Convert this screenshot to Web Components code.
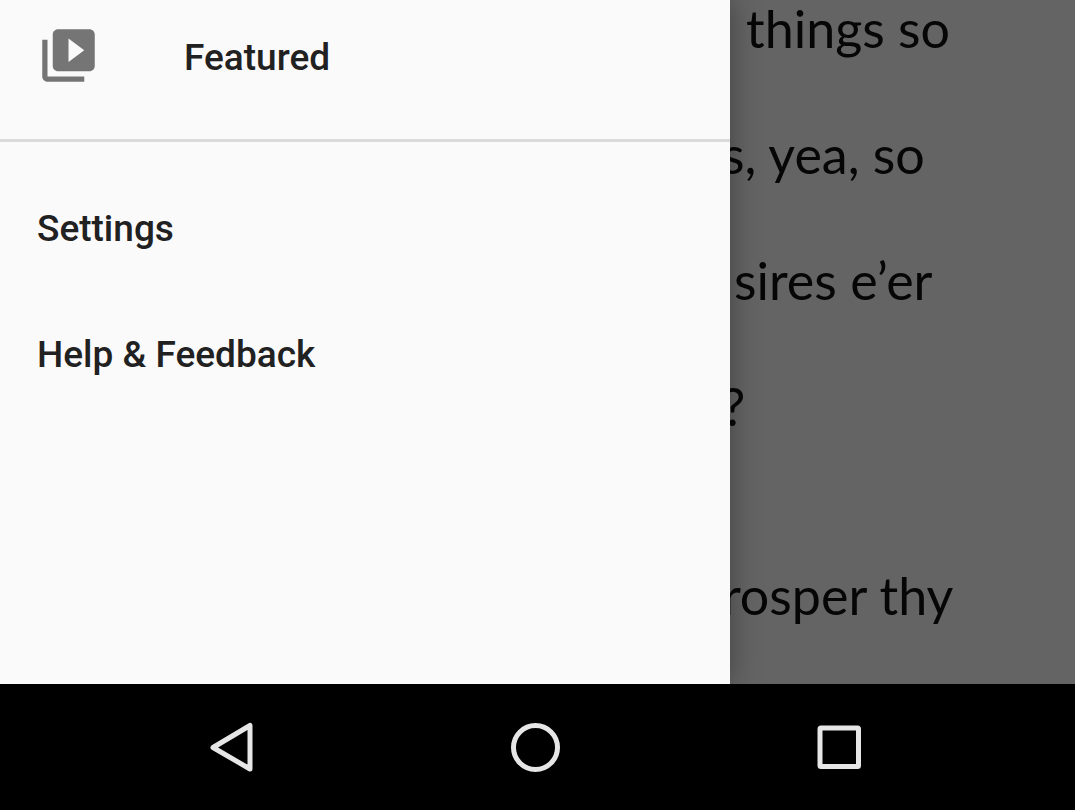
<!DOCTYPE html>
<html lang="en">
<head>
<meta charset="utf-8">
<meta name="viewport" content="width=device-width, initial-scale=1">
<title>Reader</title>
<style>
  body { margin: 0; background: #000; }
</style>
</head>
<body>
<reader-app>
  <nav-drawer slot="drawer">
    <drawer-item slot="top">
      <svg slot="icon" viewBox="0 0 24 24" fill="#757575" aria-hidden="true"><path d="M4 6H2v14c0 1.1.9 2 2 2h14v-2H4V6zm16-4H8c-1.100 0-2 .9-2 2v12c0 1.100.9 2 2 2h12c1.100 0 2-.9 2-2V4c0-1.100-.9-2-2-2zm-8 12.500v-9l6 4.500-6 4.500z"/></svg>
      Featured
    </drawer-item>
    <drawer-item>Settings</drawer-item>
    <drawer-item>Help &amp; Feedback</drawer-item>
  </nav-drawer>
  <story-text slot="story">
    <story-line indent="2">things so</story-line>
    <story-line>s, yea, so</story-line>
    <story-line indent="1">sires e’er</story-line>
    <story-line>?</story-line>
    <story-line stanza>rosper thy</story-line>
  </story-text>
  <system-bar slot="bar"></system-bar>
</reader-app>

<script>
  function define(name, html) {
    const template = document.createElement('template');
    template.innerHTML = html;
    customElements.define(name, class extends HTMLElement {
      constructor() {
        super();
        this.attachShadow({ mode: 'open' }).append(template.content.cloneNode(true));
      }
    });
  }

  define('reader-app', `
    <style>
      :host { display: flex; flex-direction: column; min-height: 100vh; }
      main { flex: 1; display: grid; grid-template-columns: 146fr 69fr; background: #646464; overflow: hidden; }
    </style>
    <main><slot name="drawer"></slot><slot name="story"></slot></main>
    <slot name="bar"></slot>`);

  define('nav-drawer', `
    <style>
      :host { display: block; z-index: 1; background: #fafafa; box-shadow: 0 0 28px rgba(0, 0, 0, .36); }
      .top { padding-bottom: 23px; border-bottom: 3px solid #dadada; --row-height: 116px; }
      .rest { padding-top: 24px; }
    </style>
    <nav aria-label="Main">
      <div class="top"><slot name="top"></slot></div>
      <div class="rest"><slot></slot></div>
    </nav>`);

  define('drawer-item', `
    <style>
      :host { display: block; }
      a {
        display: flex; align-items: center; gap: 84px;
        height: var(--row-height, 126px); padding: 0 37px;
        font: 500 37px/44px Roboto, sans-serif; color: #212121; text-decoration: none;
      }
      slot[name=icon] { display: contents; }
      ::slotted(svg) { flex: none; width: 63px; height: 63px; margin-bottom: 5px; }
    </style>
    <a href="#"><slot name="icon"></slot><span><slot></slot></span></a>`);

  define('story-text', `
    <style>
      :host {
        display: flex; flex-direction: column; gap: 70px; margin-left: -8px;
        font: 400 52px/56px Lato, sans-serif; color: #060606;
      }
    </style>
    <slot></slot>`);

  define('story-line', `
    <style>
      :host { display: block; white-space: nowrap; }
      :host([indent="1"]) { padding-left: 12px; }
      :host([indent="2"]) { padding-left: 24px; }
      :host([stanza]) { margin-top: 63px; }
    </style>
    <slot></slot>`);

  define('system-bar', `
    <style>
      :host { display: block; background: #000; }
      div { display: flex; padding: 0 84px 0 79px; }
      button {
        flex: 1; display: flex; align-items: center; justify-content: center;
        height: 126px; padding: 0; border: 0; background: none;
      }
      svg { width: 64px; height: 64px; fill: none; stroke: #e6e6e6; stroke-width: 5; stroke-linejoin: round; }
    </style>
    <div>
      <button type="button" aria-label="Back"><svg viewBox="0 0 64 64"><path d="M51 10.500v43.500L14 32.500z"/></svg></button>
      <button type="button" aria-label="Home"><svg viewBox="0 0 64 64"><circle cx="32.500" cy="32.500" r="22"/></svg></button>
      <button type="button" aria-label="Overview"><svg viewBox="0 0 64 64"><rect x="13" y="13" width="38.500" height="38.500" rx="1"/></svg></button>
    </div>`);
</script>
</body>
</html>
